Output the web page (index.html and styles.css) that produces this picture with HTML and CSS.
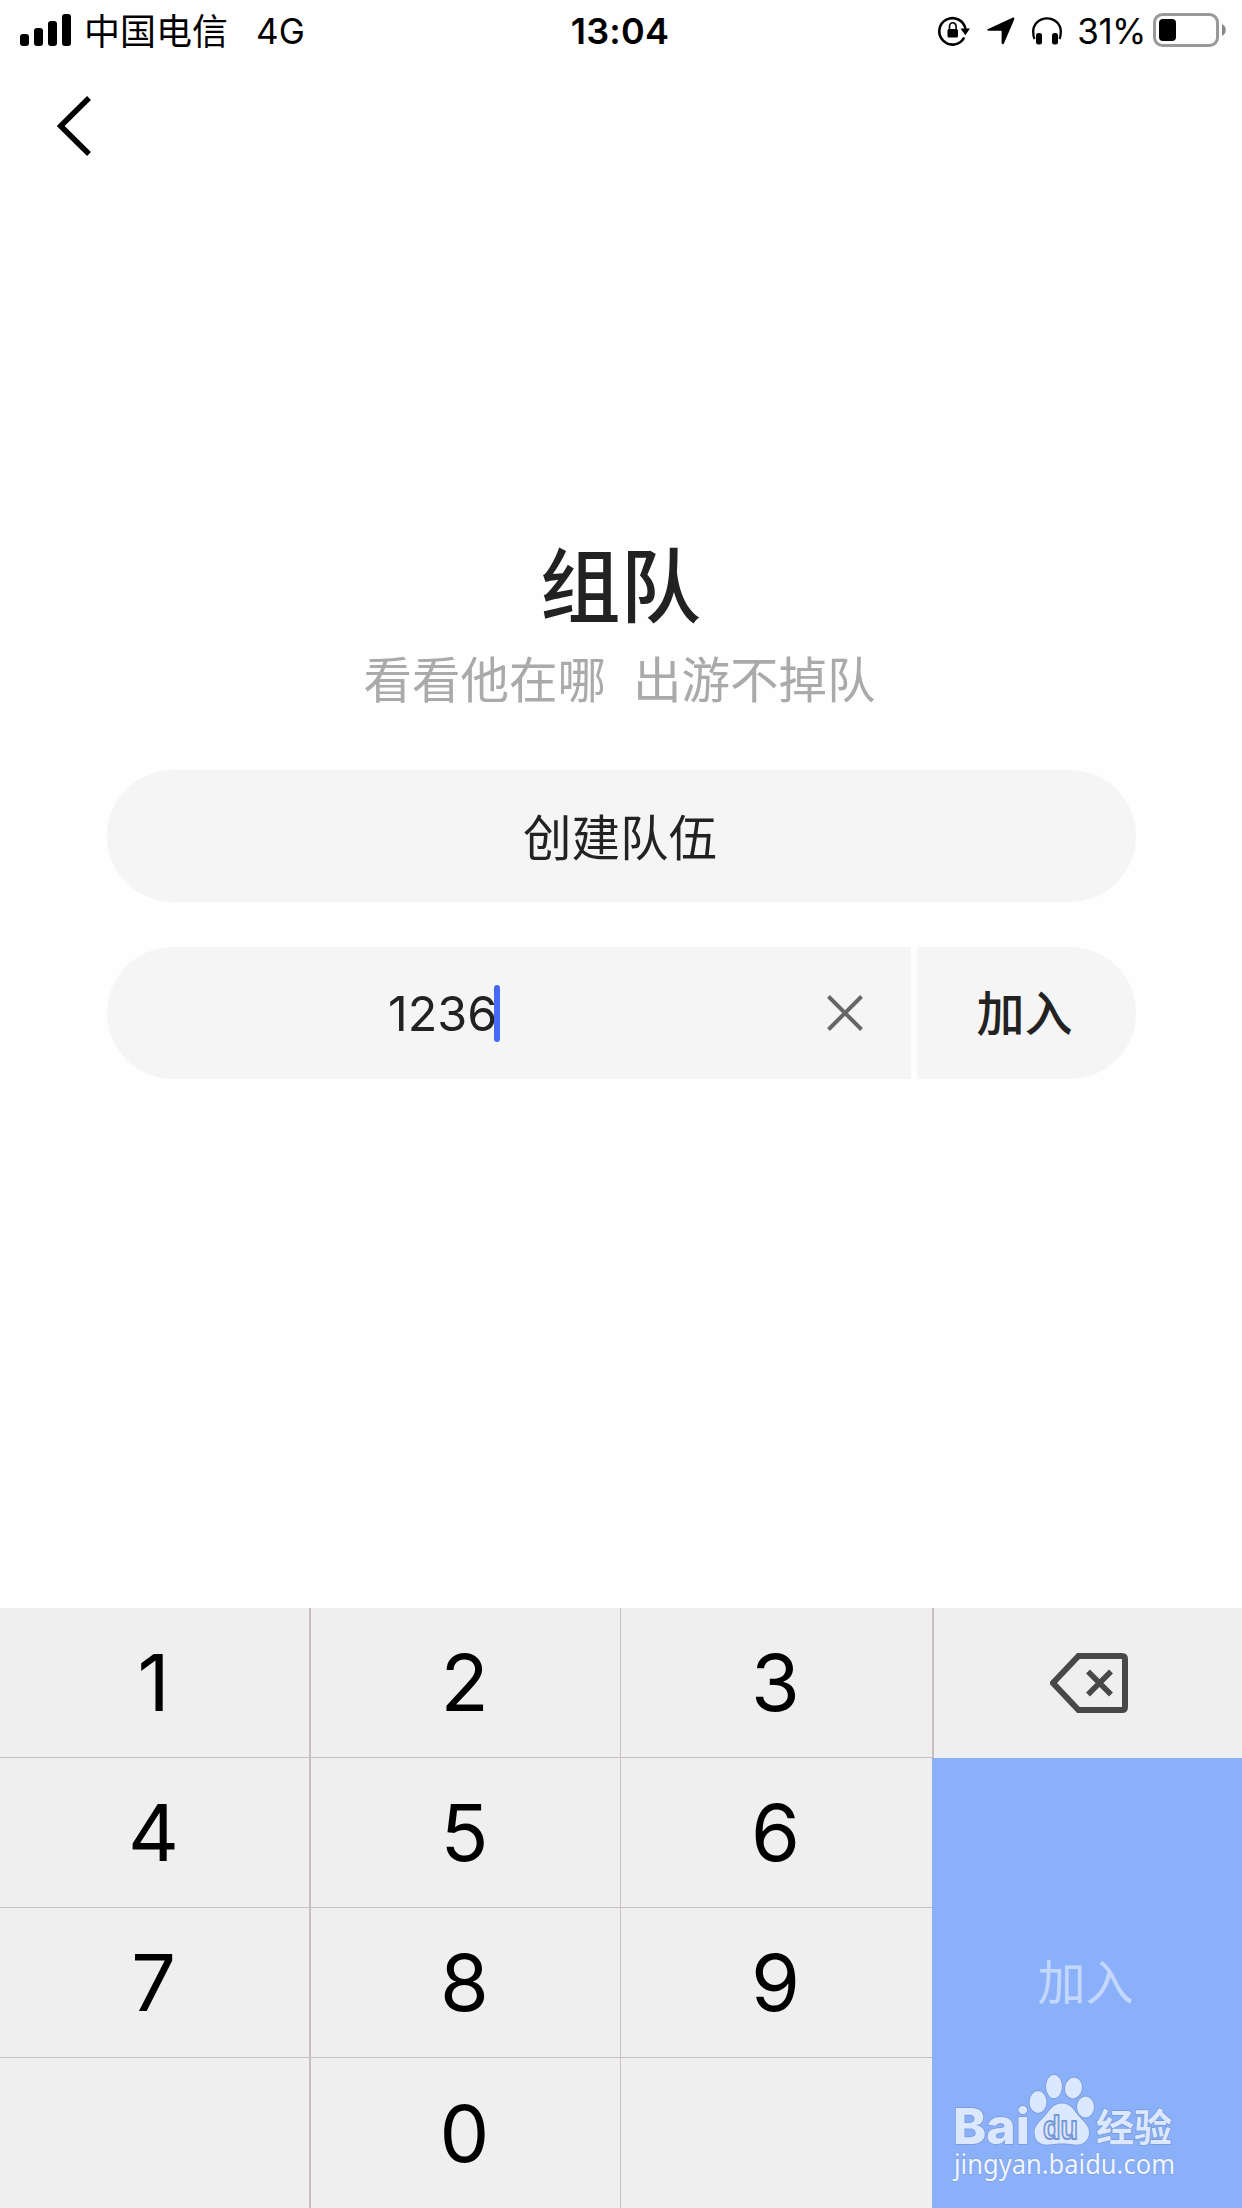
FILE: index.html
```html
<!DOCTYPE html>
<html lang="zh-CN">
<head>
<meta charset="utf-8">
<title>组队</title>
<link rel="stylesheet" href="styles.css">
</head>
<body>
<div class="screen">
  <header class="status">
    <div class="status-left">
      <svg class="signal" width="51" height="32" viewBox="0 0 51 32">
        <rect x="0" y="20" width="9" height="12" rx="3"/><rect x="14" y="14" width="9" height="18" rx="3"/><rect x="28" y="7" width="9" height="25" rx="3"/><rect x="42" y="0" width="9" height="32" rx="3"/>
      </svg>
      <span class="carrier">中国电信</span>
      <span class="network">4G</span>
    </div>
    <span class="time">13:04</span>
    <div class="status-right">
      <svg class="lock" width="33" height="30" viewBox="0 0 33 30">
        <path d="M26.2 21.5A13.2 13.2 0 1 1 27.5 13" fill="none" stroke="#000" stroke-width="2.6"/>
        <path d="M22.500 12.500h9.500l-4.700 6.700z"/><rect x="9.500" y="13" width="10.500" height="8.500" rx="1.500"/>
        <path d="M11.500 13.500v-3a3.300 3.700 0 0 1 6.600 0v3" fill="none" stroke="#000" stroke-width="1.600"/>
      </svg>
      <svg class="locate" width="28" height="28" viewBox="0 0 28 28"><path d="M1.200 12.100 25.500.8c1.300-.6 2.200.4 1.700 1.700L17 26.200c-.7 1.600-2.400 1.300-2.400-.4V14.500c0-.6-.2-.8-.8-.8H1.600C-.2 13.700-.4 12.800 1.200 12.100z"/></svg>
      <svg class="phones" width="30" height="28" viewBox="0 0 30 28">
        <path d="M2.500 22C1.200 19.500 1.200 17 1.200 14.500a13.800 13.200 0 0 1 27.600 0c0 2.500 0 5-1.300 7.500" fill="none" stroke="#000" stroke-width="2.300"/>
        <rect x="4" y="16" width="6" height="11.500" rx="2.500"/><rect x="20" y="16" width="6" height="11.500" rx="2.500"/>
      </svg>
      <span class="percent">31%</span>
      <svg class="battery" width="74" height="34" viewBox="0 0 74 34">
        <rect x="1.500" y="1.500" width="63" height="31" rx="8" fill="none" stroke="#999" stroke-width="3"/>
        <rect x="6" y="6" width="17" height="22" rx="4"/><path d="M69 11c5 2.500 5 9.500 0 12z" fill="#888"/>
      </svg>
    </div>
  </header>
  <nav class="nav">
    <svg width="34" height="60" viewBox="0 0 34 60"><path d="M32 2 3.700 30 32 58" fill="none" stroke="#000" stroke-width="5.500"/></svg>
  </nav>
  <main class="main">
    <h1 class="title">组队</h1>
    <p class="subtitle"><span>看看他在哪</span><span>出游不掉队</span></p>
    <div class="create">创建队伍</div>
    <div class="join-row">
      <div class="code">
        <span class="digits">1236</span><i class="caret"></i>
        <svg class="clear" width="36" height="36" viewBox="0 0 36 36"><path d="M1.500 1.500l33 33M34.500 1.500l-33 33" stroke="#666" stroke-width="4"/></svg>
      </div>
      <div class="join">加入</div>
    </div>
  </main>
  <section class="keypad">
    <div class="key">1</div><div class="key">2</div><div class="key">3</div>
    <div class="key-delete">
      <svg width="78" height="60" viewBox="0 0 78 60" fill="none" stroke="#484848"><path d="M28.500 3H72q3 0 3 3v48q0 3-3 3H28.500L3 30z" stroke-width="6"/><path d="M38 18.500l23 23M61 18.500l-23 23" stroke-width="5.500"/></svg>
    </div>
    <div class="key">4</div><div class="key">5</div><div class="key">6</div>
    <div class="key">7</div><div class="key">8</div><div class="key">9</div>
    <div class="key last"></div><div class="key last">0</div><div class="key last"></div>
    <div class="key-join">加入</div>
  </section>
  <svg class="watermark" width="226" height="110" viewBox="0 0 226 110">
    <g class="mark">
      <text class="bai" x="2" y="69.500" textLength="77" lengthAdjust="spacingAndGlyphs">Bai</text>
      <ellipse cx="87" cy="28" rx="8.500" ry="11"/><ellipse cx="103" cy="12.500" rx="8" ry="11.500"/>
      <ellipse cx="122.500" cy="14" rx="8.500" ry="10.500" transform="rotate(10 122.500 14)"/><ellipse cx="134.500" cy="33" rx="8.500" ry="10.500"/>
      <path d="M111 29.500c9 0 12 7 17 13 6 6 10.500 10 10 17-.5 8-7 12-15 11-5-1-8-1-12-1s-7 0-12 1c-9 1-15-3-15.500-11-.5-7 4-11 10-17 5-6 8.500-13 17.500-13z"/>
      <text class="jingyan" x="145" y="67" textLength="76" lengthAdjust="spacingAndGlyphs">经验</text>
    </g>
    <text class="du" x="92" y="65" textLength="35" lengthAdjust="spacingAndGlyphs">du</text>
    <text class="url" x="3" y="99.500" textLength="221" lengthAdjust="spacingAndGlyphs">jingyan.baidu.com</text>
  </svg>
</div>
</body>
</html>
```
FILE: styles.css
```css
* { box-sizing: border-box; }
body { margin: 0; background: #fefefe; font-family: Inter, "Noto Sans CJK SC", sans-serif; }
svg { display: block; flex: none; }
.screen { position: relative; width: 1242px; height: 2208px; display: flex; flex-direction: column; overflow: hidden; background: #fefefe; color: #222; }

.status { height: 60px; display: grid; grid-template-columns: 1fr auto 1fr; color: #000; line-height: 60px; white-space: nowrap; }
.status-left { display: flex; padding-left: 20px; }
.signal { margin-top: 14px; }
.carrier { margin-left: 13px; font-size: 36px; padding-top: 2px; }
.network { margin-left: 28px; font-size: 35px; padding-top: 1px; }
.time { font-size: 36px; font-weight: 600; padding: 1px 2px 0 0; letter-spacing: .2px; }
.status-right { display: flex; justify-content: flex-end; padding-right: 15px; }
.lock { margin-top: 16px; }
.locate { margin: 17px 0 0 16px; }
.phones { margin: 17px 0 0 17px; }
.percent { margin: 1px 7px 0 15px; font-size: 35px; letter-spacing: -.5px; }
.battery { margin-top: 13px; }

.nav { height: 120px; padding: 36px 0 0 57px; }

.main { flex: 1; padding: 352px 106px 0 107px; text-align: center; }
.title { margin: 0 2px 0 0; height: 98px; line-height: 98px; font-size: 80.500px; font-weight: 500; font-family: "Noto Sans CJK SC", sans-serif; }
.subtitle { margin: 5px 4px 0 0; height: 84px; display: flex; justify-content: center; gap: 27px; line-height: 84px; font-size: 48.500px; color: #aaa; font-family: "Noto Sans CJK SC", sans-serif; }
.create { height: 132px; margin-top: 51px; padding-right: 3px; border-radius: 66px; background: #f5f5f5; line-height: 137px; font-size: 48.500px; }
.join-row { display: flex; gap: 6px; height: 132px; margin-top: 45px; line-height: 132px; }
.code { width: 804px; display: flex; align-items: center; padding: 0 48px 0 281px; border-radius: 66px 0 0 66px; background: #f5f5f5; }
.digits { font-size: 48.500px; width: 106px; padding-top: 2px; white-space: nowrap; }
.caret { width: 6px; height: 57px; border-radius: 3px; background: #446bf5; }
.clear { margin-left: auto; }
.join { flex: 1; padding-right: 4px; border-radius: 0 66px 66px 0; background: #f5f5f5; font: 500 48px/126px "Noto Sans CJK SC", sans-serif; }

.keypad { height: 600px; display: grid; grid-template-columns: 311px 310px 313px 308px; grid-template-rows: repeat(4, 150px); background: #efefef; color: #000; }
.key { grid-column: 1; display: flex; align-items: center; justify-content: center; padding: 0 2px 1px 0; font-size: 79px; border-right: 2px solid #c8bfc0; border-bottom: 1px solid #c8bfc0; }
.key:nth-of-type(2), .key:nth-of-type(6), .key:nth-of-type(9), .key:nth-of-type(12) { grid-column: 2; border-right-width: 1px; }
.key:nth-of-type(3), .key:nth-of-type(7), .key:nth-of-type(10), .key:nth-of-type(13) { grid-column: 3; }
.last { border-bottom: 0; }
.key-delete { grid-column: 4; display: flex; padding: 45px 0 0 116px; }
.key-join { grid-column: 4; grid-row: 2 / 5; margin-left: -2px; background: #8ab0f9; color: #c4d7fd; font-size: 48px; line-height: 450px; text-align: center; padding-right: 3px; }

.watermark { position: absolute; left: 951px; top: 2074px; overflow: visible; }
.mark { fill: #dce8ff; stroke: #7898d4; stroke-width: 1.500px; paint-order: stroke; }
.bai { font: 800 49px Inter, sans-serif; }
.jingyan { font: 700 38px "Noto Sans CJK SC", sans-serif; }
.du { font: 700 34px "Liberation Sans", sans-serif; fill: #dce8ff; stroke: #7898d4; stroke-width: 2px; }
.url { font: 400 28px "Noto Sans", sans-serif; fill: #f0f5ff; stroke: #7898d4; stroke-width: 1px; paint-order: stroke; }
```
